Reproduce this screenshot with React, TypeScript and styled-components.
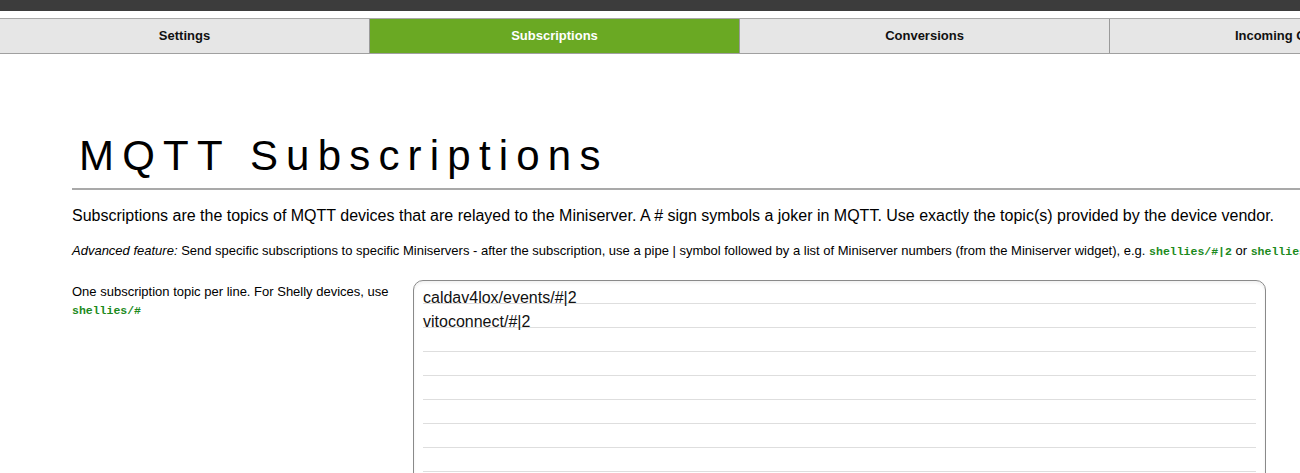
import React from "react";
import styled, { createGlobalStyle } from "styled-components";

const GlobalStyle = createGlobalStyle`
  html, body {
    margin: 0;
    padding: 0;
    background: #fff;
    overflow: hidden;
    font-family: "Liberation Sans", Arial, sans-serif;
    color: #000;
  }
`;

const TopBar = styled.div`
  height: 11px;
  background: #3c3c3c;
`;

const TabBar = styled.nav`
  display: flex;
  margin-top: 7px;
  width: 1850px;
  border-top: 1px solid #a8a8a8;
  border-bottom: 1px solid #a0a0a0;
  background: #e6e6e6;
`;

const Tab = styled.div<{ $active?: boolean }>`
  flex: 0 0 370px;
  height: 34px;
  padding-bottom: 1px;
  display: flex;
  align-items: center;
  justify-content: center;
  box-sizing: border-box;
  border-right: 1px solid #9a9a9a;
  background: ${(p) => (p.$active ? "#6aa923" : "#e6e6e6")};
  color: ${(p) => (p.$active ? "#fff" : "#111")};
  font-size: 13px;
  font-weight: bold;
`;

const Content = styled.main`
  width: 1500px;
  margin-left: 72px;
`;

const Title = styled.h1`
  margin: 78px 0 0;
  padding-left: 7px;
  font-size: 42px;
  font-weight: normal;
  letter-spacing: 8.2px;
  line-height: 48px;
`;

const Rule = styled.hr`
  margin: 8px 0 0;
  border: 0;
  height: 2px;
  background: #a9a9a9;
`;

const Intro = styled.p`
  margin: 17px 0 0;
  font-size: 16px;
`;

const Note = styled.p`
  margin: 18px 0 0;
  font-size: 13px;
`;

const Code = styled.code`
  font-family: "Liberation Mono", "Courier New", monospace;
  font-size: 11.5px;
  font-weight: bold;
  color: #1c8a1c;
`;

const FormRow = styled.div`
  display: grid;
  grid-template-columns: 341px 853px;
  margin-top: 22px;
`;

const Label = styled.label`
  padding-top: 3px;
  font-size: 13px;
  line-height: 18px;
`;

const TopicArea = styled.textarea`
  box-sizing: border-box;
  width: 853px;
  height: 240px;
  padding: 5px 9px;
  border: 1px solid #8a8a8a;
  border-radius: 10px;
  resize: none;
  outline: none;
  font-family: "Liberation Sans", Arial, sans-serif;
  font-size: 16px;
  line-height: 24px;
  color: #111;
  background-color: #fff;
  background-image: repeating-linear-gradient(
    to bottom,
    transparent 0,
    transparent 17px,
    #dedede 17px,
    #dedede 18px,
    transparent 18px,
    transparent 24px
  );
  background-origin: content-box;
  background-clip: content-box;
  box-shadow: inset 0 2px 3px rgba(0, 0, 0, 0.06);
  overflow: hidden;
`;

const tabs = ["Settings", "Subscriptions", "Conversions", "Incoming Overview", "Logs"];

export default function App() {
  return (
    <>
      <GlobalStyle />
      <TopBar />
      <TabBar>
        {tabs.map((t) => (
          <Tab key={t} $active={t === "Subscriptions"}>
            {t}
          </Tab>
        ))}
      </TabBar>
      <Content>
        <Title>MQTT Subscriptions</Title>
        <Rule />
        <Intro>
          Subscriptions are the topics of MQTT devices that are relayed to the Miniserver. A # sign symbols a
          joker in MQTT. Use exactly the topic(s) provided by the device vendor.
        </Intro>
        <Note>
          <i>Advanced feature:</i> Send specific subscriptions to specific Miniservers - after the subscription,
          use a pipe | symbol followed by a list of Miniserver numbers (from the Miniserver widget), e.g.{" "}
          <Code>shellies/#|2</Code> or <Code>shellies/#|1,2</Code>
        </Note>
        <FormRow>
          <Label htmlFor="subscriptions">
            One subscription topic per line. For Shelly devices, use
            <br />
            <Code>shellies/#</Code>
          </Label>
          <TopicArea
            id="subscriptions"
            spellCheck={false}
            defaultValue={"caldav4lox/events/#|2\nvitoconnect/#|2"}
          />
        </FormRow>
      </Content>
    </>
  );
}
